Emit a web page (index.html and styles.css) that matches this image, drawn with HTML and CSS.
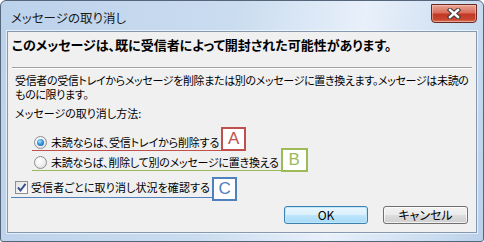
FILE: index.html
```html
<!DOCTYPE html>
<html lang="ja">
<head>
<meta charset="utf-8">
<title>メッセージの取り消し</title>
<link rel="stylesheet" href="styles.css">
</head>
<body>
<div class="window">
  <div class="titlebar">
    <span class="title">メッセージの取り消し</span>
    <button class="close" aria-label="閉じる">
      <svg width="14" height="11" viewBox="0 0 14 11">
        <path d="M3 2 L11 9 M11 2 L3 9" stroke="#3d3d3d" stroke-width="4.4" stroke-linecap="square" fill="none"/>
        <path d="M3 2 L11 9 M11 2 L3 9" stroke="#ffffff" stroke-width="2.4" stroke-linecap="square" fill="none"/>
      </svg>
    </button>
  </div>
  <div class="client">
    <div class="header">このメッセージは、既に受信者によって開封された可能性があります。</div>
    <div class="sep"></div>
    <p class="desc">受信者の受信トレイからメッセージを削除または別のメッセージに置き換えます。メッセージは未読の<br>ものに限ります。</p>
    <div class="method">メッセージの取り消し方法:</div>
    <div class="row row-a">
      <label class="opt opt-a"><span class="radio checked"></span>未読ならば、受信トレイから削除する</label>
      <span class="tag tag-a">A</span>
    </div>
    <div class="row row-b">
      <label class="opt opt-b"><span class="radio"></span>未読ならば、削除して別のメッセージに置き換える</label>
      <span class="tag tag-b">B</span>
    </div>
    <div class="row row-c">
      <label class="opt opt-c"><span class="checkbox"><svg width="11" height="11" viewBox="0 0 11 11"><path d="M2 5.5 L4.5 8.5 L9.5 1.8" stroke="#3b4f8f" stroke-width="2" fill="none"/></svg></span>受信者ごとに取り消し状況を確認する</label>
      <span class="tag tag-c">C</span>
    </div>
    <div class="buttons">
      <button class="btn btn-default">OK</button>
      <button class="btn">キャンセル</button>
    </div>
  </div>
</div>
</body>
</html>
```
FILE: styles.css
```css
html, body {
  margin: 0;
  padding: 0;
  background: #ffffff;
}
body {
  font-family: "Noto Sans CJK JP", "Noto Sans", sans-serif;
  font-size: 11px;
  color: #000;
  font-feature-settings: "palt";
}
.window {
  width: 484px;
  height: 242px;
  box-sizing: border-box;
  border: 1px solid #56667a;
  border-radius: 6px 6px 3px 3px;
  background: linear-gradient(100deg, #bcd2eb 0%, #cadcf0 45%, #e8f0fa 70%, #d0e0f2 87%, #bad1ea 100%);
  display: flex;
  flex-direction: column;
  padding: 0 6px 8px 6px;
}
.titlebar {
  height: 30px;
  flex: none;
  display: flex;
  align-items: flex-start;
}
.title {
  margin: 9px 0 0 4px;
  line-height: 16px;
  font-size: 12.5px;
  color: #1a1a1a;
}
.close {
  margin: 3px 0 0 auto;
  width: 46px;
  height: 19px;
  padding: 0;
  border: 1px solid #6b2a20;
  border-radius: 0 0 4px 4px;
  background: linear-gradient(to bottom, #eba594 0%, #d96e5b 45%, #c23724 55%, #c9462f 85%, #d97e64 100%);
  box-shadow: inset 0 0 0 1px rgba(255, 220, 210, 0.45);
  display: flex;
  align-items: center;
  justify-content: center;
}
.client {
  flex: 1;
  border: 1px solid #8498b2;
  box-shadow: 0 0 0 1px rgba(255, 255, 255, 0.6);
  background: #f0f0f0;
  display: flex;
  flex-direction: column;
  align-items: flex-start;
}
.header {
  padding: 5px 0 0 4px;
  font-weight: bold;
  font-size: 13px;
  line-height: 16px;
}
.sep {
  align-self: stretch;
  margin: 14px 4px 0 4px;
  height: 1px;
  background: #a0a0a0;
  border-bottom: 1px solid #ffffff;
}
.desc {
  margin: 4px 0 0 7px;
  line-height: 14px;
  letter-spacing: -0.35px;
  white-space: nowrap;
}
.method {
  margin: 4px 0 0 7px;
  line-height: 16px;
}
.row {
  display: flex;
  align-items: flex-end;
}
.row-a { margin: 13px 0 0 24px; }
.row-b { margin: 3px 0 0 24px; }
.row-c { margin: 8px 0 0 3px; }
.opt {
  display: flex;
  align-items: center;
  line-height: 16px;
  padding: 0 2px 0 2px;
}
.opt-a { border-bottom: 1px solid #c0504d; letter-spacing: -0.15px; }
.opt-b { border-bottom: 1px solid #9bbb59; letter-spacing: -0.25px; }
.opt-c { border-bottom: 1px solid #4f81bd; padding: 0 2px 2px 4px; letter-spacing: 0.1px; }
.radio {
  width: 13px;
  height: 13px;
  box-sizing: border-box;
  border-radius: 50%;
  border: 1px solid #8f8f8f;
  background: radial-gradient(circle at 40% 35%, #ffffff 0%, #f2f2f2 45%, #d6d6d6 100%);
  margin-right: 4px;
  display: flex;
  align-items: center;
  justify-content: center;
}
.radio.checked::after {
  content: "";
  width: 7px;
  height: 7px;
  border-radius: 50%;
  background: radial-gradient(circle at 40% 35%, #b9e4fb 0%, #3a9ee0 40%, #0e5a9c 100%);
}
.checkbox {
  width: 13px;
  height: 13px;
  box-sizing: border-box;
  border: 1px solid #8f8f8f;
  background: linear-gradient(135deg, #e2e2e2 0%, #ffffff 100%);
  margin-right: 3px;
  display: flex;
  align-items: center;
  justify-content: center;
}
.tag {
  width: 25px;
  height: 24px;
  box-sizing: border-box;
  border: 2px solid;
  background: #ffffff;
  font-family: "Liberation Sans", Arial, sans-serif;
  font-size: 17px;
  line-height: 20px;
  text-align: center;
  margin-top: -7px;
}
.tag-a { color: #c0504d; border-color: #c0504d; }
.tag-b { color: #9bbb59; border-color: #9bbb59; width: 27px; margin-bottom: -1px; }
.tag-c { color: #4f81bd; border-color: #4f81bd; margin: -5px 0 -3px 0; }
.buttons {
  align-self: stretch;
  display: flex;
  justify-content: flex-end;
  gap: 15px;
  margin-top: 8px;
  padding-right: 8px;
}
.btn {
  width: 84px;
  height: 18px;
  padding: 0;
  font-family: "Noto Sans CJK JP", "Noto Sans", sans-serif;
  font-feature-settings: "palt";
  font-size: 12px;
  line-height: 14px;
  color: #000;
  border: 1px solid #707070;
  border-radius: 3px;
  background: linear-gradient(to bottom, #f2f2f2 0%, #ebebeb 50%, #dddddd 51%, #cfcfcf 100%);
  box-shadow: inset 0 0 0 1px rgba(255, 255, 255, 0.7);
}
.btn + .btn { width: 85px; }
.btn-default {
  border-color: #3c7fb1;
  background: linear-gradient(to bottom, #eaf6fd 0%, #d9f0fc 50%, #bee6fd 51%, #a7d9f5 100%);
  box-shadow: inset 0 0 0 1px #bfe8fb;
}
```
